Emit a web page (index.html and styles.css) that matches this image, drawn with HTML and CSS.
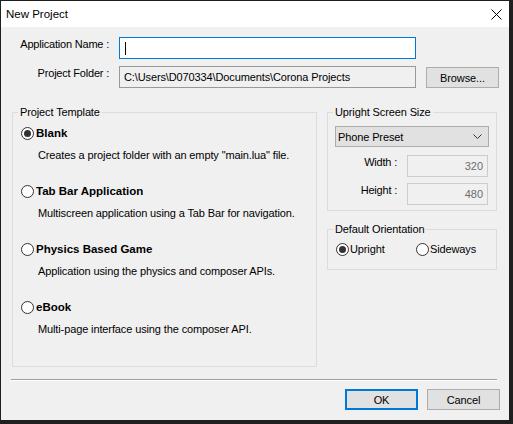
FILE: index.html
```html
<!DOCTYPE html>
<html>
<head>
<meta charset="utf-8">
<link rel="stylesheet" href="styles.css">
</head>
<body>
<div class="window">
  <header class="titlebar">
    <span class="title">New Project</span>
    <svg class="close" width="11" height="11" viewBox="0 0 11 11"><path d="M0.5 0.5 L10.5 10.5 M10.5 0.5 L0.5 10.5" stroke="#000" stroke-width="1" fill="none"/></svg>
  </header>
  <main class="content">
    <div class="paths">
      <label class="lbl">Application Name :</label>
      <div class="edit edit-active"><span class="caret"></span></div>
      <span></span>
      <label class="lbl">Project Folder :</label>
      <div class="edit edit-readonly">C:\Users\D070334\Documents\Corona Projects</div>
      <button class="btn btn-browse">Browse...</button>
    </div>
    <div class="groups">
      <fieldset class="group group-template">
        <legend>Project Template</legend>
        <div class="tpl-list">
          <div class="tpl">
            <div class="radio-row"><span class="radio checked"></span><span class="tpl-name">Blank</span></div>
            <div class="tpl-desc">Creates a project folder with an empty "main.lua" file.</div>
          </div>
          <div class="tpl">
            <div class="radio-row"><span class="radio"></span><span class="tpl-name">Tab Bar Application</span></div>
            <div class="tpl-desc">Multiscreen application using a Tab Bar for navigation.</div>
          </div>
          <div class="tpl">
            <div class="radio-row"><span class="radio"></span><span class="tpl-name">Physics Based Game</span></div>
            <div class="tpl-desc">Application using the physics and composer APIs.</div>
          </div>
          <div class="tpl">
            <div class="radio-row"><span class="radio"></span><span class="tpl-name">eBook</span></div>
            <div class="tpl-desc">Multi-page interface using the composer API.</div>
          </div>
        </div>
      </fieldset>
      <div class="side">
        <fieldset class="group group-size">
          <legend>Upright Screen Size</legend>
          <div class="select">
            <span>Phone Preset</span>
            <svg class="chev" width="9" height="5" viewBox="0 0 9 5"><path d="M0.5 0.5 L4.5 4.5 L8.5 0.5" stroke="#333" stroke-width="1" fill="none"/></svg>
          </div>
          <div class="dims">
            <label class="lbl">Width :</label><div class="edit edit-disabled">320</div>
            <label class="lbl">Height :</label><div class="edit edit-disabled">480</div>
          </div>
        </fieldset>
        <fieldset class="group group-orient">
          <legend>Default Orientation</legend>
          <div class="orient">
            <div class="radio-row"><span class="radio radio-tight checked"></span>Upright</div>
            <div class="radio-row"><span class="radio radio-tight"></span>Sideways</div>
          </div>
        </fieldset>
      </div>
    </div>
    <div class="separator"></div>
    <div class="actions">
      <button class="btn btn-default">OK</button>
      <button class="btn">Cancel</button>
    </div>
  </main>
</div>
</body>
</html>
```
FILE: styles.css
```css
* { box-sizing: border-box; }
html, body { margin: 0; padding: 0; }
body {
  background: #1f1f1f;
  width: 513px;
  height: 424px;
  overflow: hidden;
  font-family: "Liberation Sans", Arial, sans-serif;
  font-size: 11px;
  letter-spacing: -0.12px;
  color: #000;
}
.window {
  margin: 1px 0 0 1px;
  width: 508px;
  height: 419px;
  background: #f0f0f0;
  display: flex;
  flex-direction: column;
}
.titlebar {
  height: 26px;
  flex: none;
  background: #fff;
  display: flex;
  align-items: center;
  justify-content: space-between;
  padding: 0 7px 0 5px;
}
.title { font-size: 11.5px; letter-spacing: 0; }
.close { display: block; margin-top: 1px; }
.content { flex: 1; display: flex; flex-direction: column; }

.paths {
  display: grid;
  grid-template-columns: 108px 297px 73px;
  column-gap: 10px;
  row-gap: 7px;
  margin-top: 10px;
}
.lbl { text-align: right; line-height: 14px; align-self: start; letter-spacing: -0.2px; }
.edit {
  height: 22px;
  border: 1px solid #a0a0a0;
  line-height: 20px;
  padding: 0 4px;
  white-space: nowrap;
}
.edit-active { background: #fff; border-color: #0078d7; }
.caret { display: block; width: 1px; height: 13px; background: #000; margin: 4px 0 0 1px; }
.edit-readonly { background: #f0f0f0; border-color: #999; }
.edit-disabled { background: #f0f0f0; border-color: #cccccc; color: #6d6d6d; text-align: right; letter-spacing: 0; }

.btn {
  width: 73px;
  height: 21px;
  background: #e1e1e1;
  border: 1px solid #adadad;
  font: inherit;
  letter-spacing: inherit;
  color: #000;
  padding: 0;
  margin: 0;
}
.btn-browse { margin-top: 1px; }
.btn-default { border: 2px solid #0078d7; }

.groups {
  display: grid;
  grid-template-columns: 305px 170px;
  column-gap: 10px;
  margin: 17px 0 0 11px;
  height: 262px;
}
.group {
  margin: 0;
  padding: 0;
  border: 1px solid #dcdcdc;
  min-width: 0;
}
.group legend {
  margin-left: 5px;
  padding: 0 2px;
  line-height: 14px;
}
.tpl-list { padding: 6px 0 0 8px; }
.tpl { margin-bottom: 20px; }
.radio-row { display: flex; align-items: center; height: 16px; line-height: 16px; }
.radio {
  width: 13px;
  height: 13px;
  border: 1px solid #333;
  border-radius: 50%;
  background: #fff;
  margin-right: 2px;
  display: flex;
  align-items: center;
  justify-content: center;
  flex: none;
}
.radio-tight { margin-right: 1px; }
.radio.checked::after {
  content: "";
  width: 7px;
  height: 7px;
  border-radius: 50%;
  background: #333;
}
.tpl-name { font-weight: bold; font-size: 11.5px; letter-spacing: 0; }
.tpl-desc { margin-top: 6px; padding-left: 17px; line-height: 16px; }

.side { align-self: start; }
.group-size { padding-bottom: 5px; }
.select {
  margin: 7px 7px 0 7px;
  height: 21px;
  background: #e1e1e1;
  border: 1px solid #adadad;
  display: flex;
  align-items: center;
  justify-content: space-between;
  padding: 0 6px 0 2px;
}
.chev { display: block; }
.dims {
  display: grid;
  grid-template-columns: 1fr 81px;
  column-gap: 10px;
  row-gap: 6px;
  margin: 8px 8px 0 7px;
}
.group-orient { margin-top: 11px; padding-bottom: 12px; }
.orient {
  display: grid;
  grid-template-columns: 80px auto;
  padding: 5px 0 0 8px;
}

.separator {
  margin: 12px 0 0 10px;
  width: 486px;
  border-top: 1px solid #a0a0a0;
  border-bottom: 1px solid #fff;
}
.actions {
  display: flex;
  justify-content: flex-end;
  gap: 9px;
  padding-right: 9px;
  margin-top: 8px;
}
```
